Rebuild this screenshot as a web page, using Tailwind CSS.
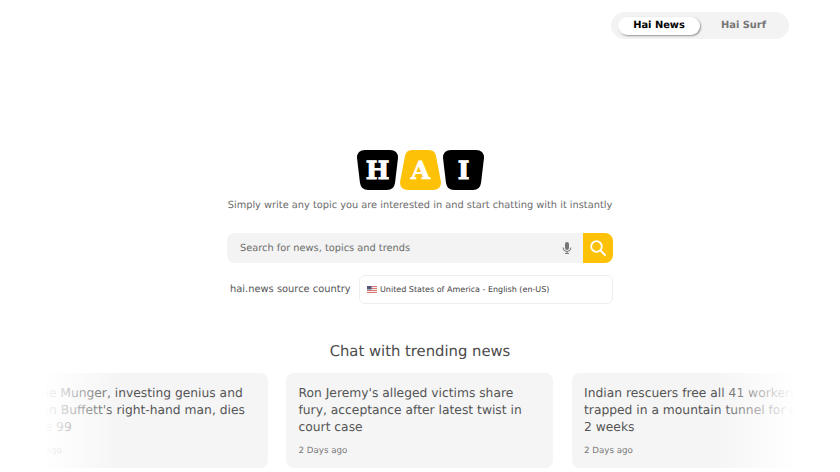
<!DOCTYPE html>
<html><head><meta charset="utf-8"><script src="https://cdn.jsdelivr.net/npm/@tailwindcss/browser@4"></script></head>
<body class="bg-white">
<div class="relative w-[840px] h-[472px] overflow-hidden bg-white font-['DejaVu_Sans',sans-serif] text-[#555] [text-rendering:geometricPrecision]">
  <div class="flex justify-end pt-[12px] pr-[51px]">
    <div class="flex items-center w-[178px] h-[27px] rounded-full bg-[#f3f3f3] pl-[7px] pr-[2px] text-[9.9px] font-bold">
      <div class="w-[82px] h-[18px] pt-[1px] flex items-center justify-center rounded-full bg-white text-black shadow-[1px_1px_2px_rgba(0,0,0,0.4)]">Hai News</div>
      <div class="flex-1 pt-[1px] text-center text-[#777]">Hai Surf</div>
    </div>
  </div>
  <div class="flex justify-center mt-[111px] h-[40px] w-full">
    <svg width="43" height="40" viewBox="0 0 43 40"><path d="M9 0H34Q42 0 42 8L39 33Q38 40 31 40H12Q5 40 4 33L1 8Q1 0 9 0Z" fill="#000"/><text x="21.5" y="29" text-anchor="middle" font-family="DejaVu Serif" font-weight="900" font-size="25" fill="#fff" stroke="#fff" stroke-width="1">H</text></svg>
    <svg width="43" height="40" viewBox="0 0 43 40"><path d="M13 0H30Q36 0 37 6L42 32Q42 40 34 40H9Q1 40 1 32L6 6Q7 0 13 0Z" fill="#fdc107"/><text x="21.5" y="29" text-anchor="middle" font-family="DejaVu Serif" font-weight="900" font-size="25" fill="#fff" stroke="#fff" stroke-width="0.6">A</text></svg>
    <svg width="43" height="40" viewBox="0 0 43 40"><path d="M9 0H34Q42 0 42 8L39 33Q38 40 31 40H12Q5 40 4 33L1 8Q1 0 9 0Z" fill="#000"/><text x="21.5" y="29" text-anchor="middle" font-family="DejaVu Serif" font-weight="900" font-size="25" fill="#fff" stroke="#fff" stroke-width="1">I</text></svg>
  </div>
  <p class="mt-[8px] text-center text-[9.8px] leading-[16px] text-[#6b6b6b]">Simply write any topic you are interested in and start chatting with it instantly</p>
  <div class="mx-auto mt-[19px] w-[386px] flex h-[30px]">
    <div class="flex-1 flex items-center justify-between bg-[#f3f3f3] rounded-l-[8px] pl-[13px] pr-[11px] text-[9.8px] text-[#6b6b6b]">
      <span class="pt-[2px]">Search for news, topics and trends</span>
      <svg width="10" height="12" viewBox="0 0 10 12" fill="#777"><rect x="3" y="0" width="4" height="8" rx="2"/><path d="M1 5.5a4 4 0 0 0 8 0" fill="none" stroke="#777" stroke-width="1"/><rect x="4.5" y="9" width="1" height="2"/><rect x="3" y="11" width="4" height="1"/></svg>
    </div>
    <div class="w-[30px] flex items-center justify-center bg-[#fdc107] rounded-r-[8px]">
      <svg width="18" height="18" viewBox="0 0 18 18" fill="none" stroke="#fff" stroke-width="1.8" stroke-linecap="round"><circle cx="7.5" cy="7.5" r="5.3"/><path d="M11.5 11.5L16 16"/></svg>
    </div>
  </div>
  <div class="mx-auto mt-[12px] w-[386px] flex items-center h-[29px]">
    <span class="w-[132px] shrink-0 pl-[3px] pt-[2px] text-[9.9px] text-[#555] whitespace-nowrap">hai.news source country</span>
    <div class="flex-1 h-[29px] flex items-center gap-[3px] rounded-[6px] border border-[#eeeeee] pl-[7px] text-[8px] text-[#444] whitespace-nowrap">
      <svg width="10" height="7" viewBox="0 0 10 7"><rect width="10" height="7" fill="#d77"/><rect y="1" width="10" height="1" fill="#eee"/><rect y="3" width="10" height="1" fill="#eee"/><rect y="5" width="10" height="1" fill="#eee"/><rect width="4.5" height="3.5" fill="#557"/></svg>
      <span>United States of America - English (en-US)</span>
    </div>
  </div>
  <h2 class="mt-[38px] text-center text-[14.8px] leading-[20px] text-[#4b4b4b]">Chat with trending news</h2>
  <div class="flex gap-[18.5px] mt-[11px] ml-[0.5px] w-[900px] relative">
    <div class="w-[267px] h-[95px] shrink-0 rounded-[8px] bg-[#f5f5f5] pt-[12px] pl-[12.5px] overflow-hidden">
      <p class="text-[12.3px] leading-[17px] whitespace-nowrap">Charlie Munger, investing genius and<br>Warren Buffett's right-hand man, dies<br>at age 99</p>
      <p class="mt-[9px] text-[8.7px] leading-[13px] text-[#777]">2 Days ago</p>
    </div>
    <div class="w-[267px] h-[95px] shrink-0 rounded-[8px] bg-[#f5f5f5] pt-[12px] pl-[12.5px]">
      <p class="text-[12.3px] leading-[17px] whitespace-nowrap">Ron Jeremy's alleged victims share<br>fury, acceptance after latest twist in<br>court case</p>
      <p class="mt-[9px] text-[8.7px] leading-[13px] text-[#777]">2 Days ago</p>
    </div>
    <div class="w-[267px] h-[95px] shrink-0 rounded-[8px] bg-[#f5f5f5] pt-[12px] pl-[12.5px]">
      <p class="text-[12.3px] leading-[17px] whitespace-nowrap">Indian rescuers free all 41 workers<br>trapped in a mountain tunnel for over<br>2 weeks</p>
      <p class="mt-[9px] text-[8.7px] leading-[13px] text-[#777]">2 Days ago</p>
    </div>
  </div>
  <div class="absolute left-0 top-[365px] bottom-0 w-[120px] bg-linear-to-r from-white from-[37%] to-transparent"></div>
  <div class="absolute right-0 top-[365px] bottom-0 w-[125px] bg-linear-to-l from-white from-[36%] to-transparent"></div>
</div>
</body></html>
